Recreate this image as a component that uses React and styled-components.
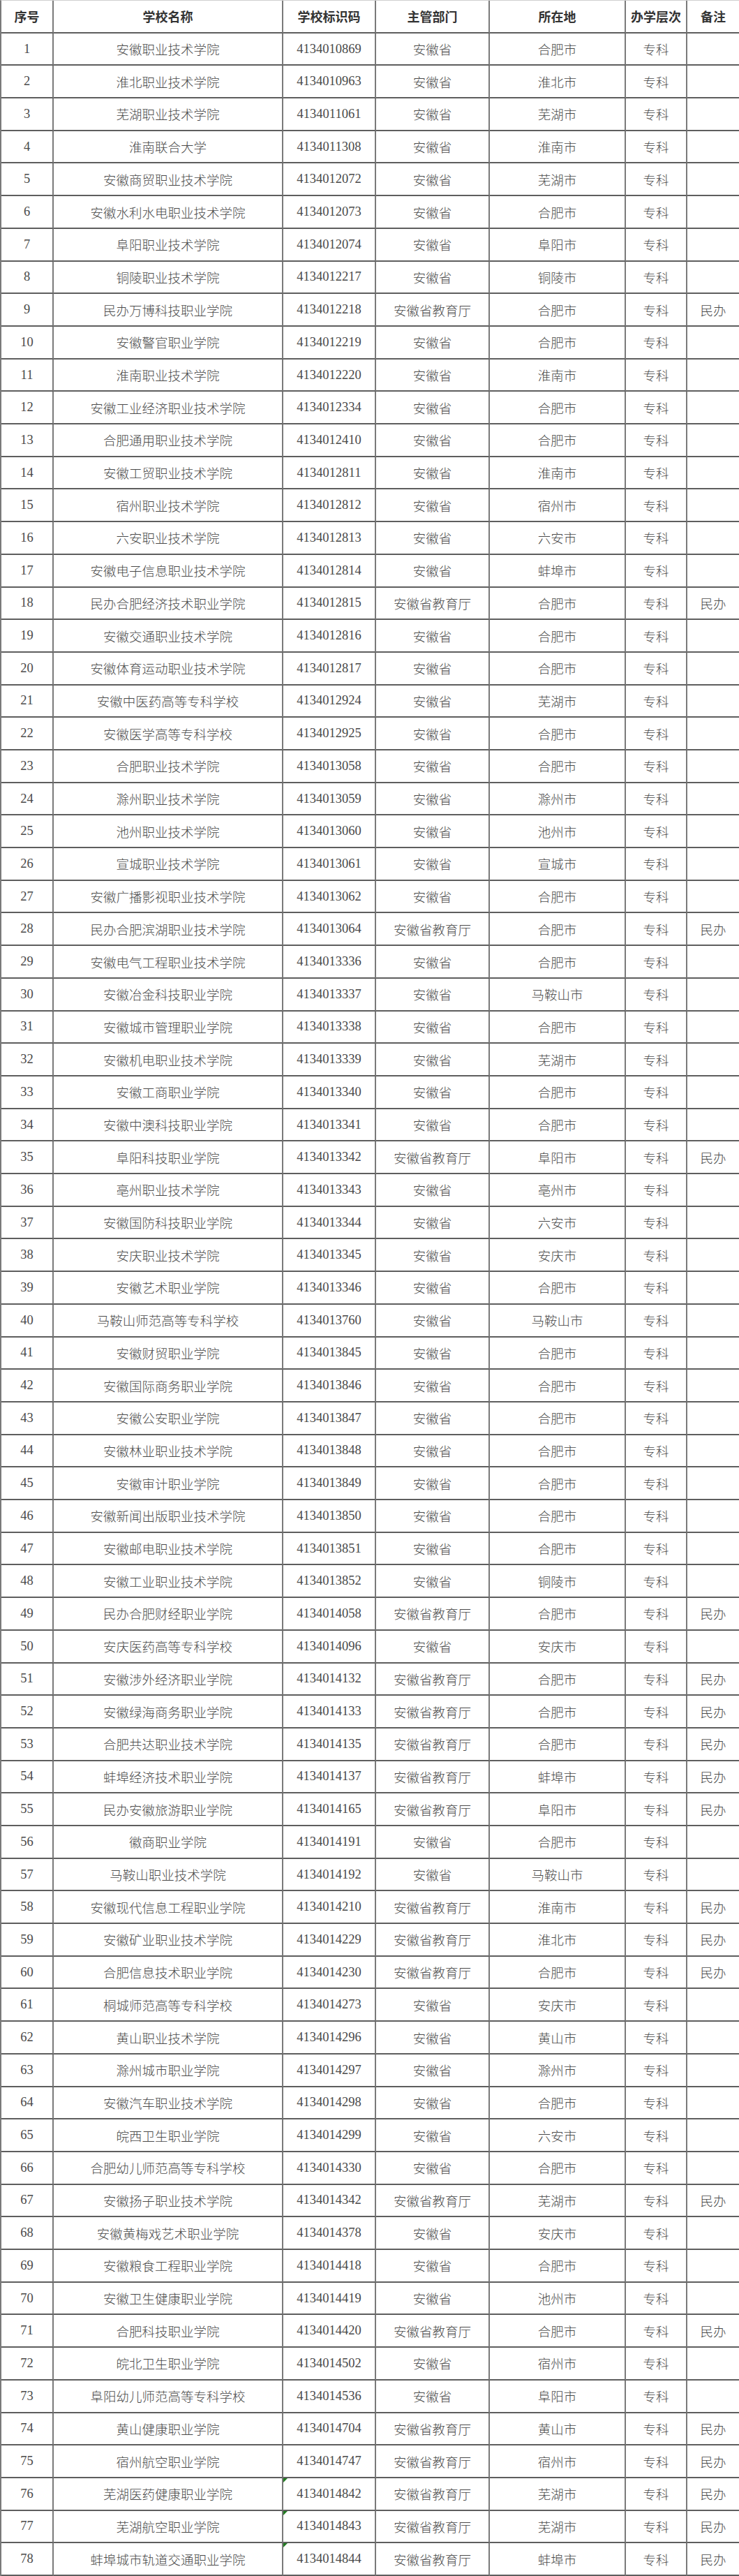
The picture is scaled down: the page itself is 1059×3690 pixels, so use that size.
import React from 'react'
import styled, { createGlobalStyle } from 'styled-components'

const GlobalStyle = createGlobalStyle`
  html, body {
    margin: 0;
    padding: 0;
    background: #fff;
  }
`

const headers = ['序号', '学校名称', '学校标识码', '主管部门', '所在地', '办学层次', '备注']

// 名称, 标识码, 主管部门(1 = 安徽省教育厅, 民办), 所在地, 文本格式标记
const schools = [
  ['安徽职业技术学院', '4134010869', 0, '合肥市'],
  ['淮北职业技术学院', '4134010963', 0, '淮北市'],
  ['芜湖职业技术学院', '4134011061', 0, '芜湖市'],
  ['淮南联合大学', '4134011308', 0, '淮南市'],
  ['安徽商贸职业技术学院', '4134012072', 0, '芜湖市'],
  ['安徽水利水电职业技术学院', '4134012073', 0, '合肥市'],
  ['阜阳职业技术学院', '4134012074', 0, '阜阳市'],
  ['铜陵职业技术学院', '4134012217', 0, '铜陵市'],
  ['民办万博科技职业学院', '4134012218', 1, '合肥市'],
  ['安徽警官职业学院', '4134012219', 0, '合肥市'],
  ['淮南职业技术学院', '4134012220', 0, '淮南市'],
  ['安徽工业经济职业技术学院', '4134012334', 0, '合肥市'],
  ['合肥通用职业技术学院', '4134012410', 0, '合肥市'],
  ['安徽工贸职业技术学院', '4134012811', 0, '淮南市'],
  ['宿州职业技术学院', '4134012812', 0, '宿州市'],
  ['六安职业技术学院', '4134012813', 0, '六安市'],
  ['安徽电子信息职业技术学院', '4134012814', 0, '蚌埠市'],
  ['民办合肥经济技术职业学院', '4134012815', 1, '合肥市'],
  ['安徽交通职业技术学院', '4134012816', 0, '合肥市'],
  ['安徽体育运动职业技术学院', '4134012817', 0, '合肥市'],
  ['安徽中医药高等专科学校', '4134012924', 0, '芜湖市'],
  ['安徽医学高等专科学校', '4134012925', 0, '合肥市'],
  ['合肥职业技术学院', '4134013058', 0, '合肥市'],
  ['滁州职业技术学院', '4134013059', 0, '滁州市'],
  ['池州职业技术学院', '4134013060', 0, '池州市'],
  ['宣城职业技术学院', '4134013061', 0, '宣城市'],
  ['安徽广播影视职业技术学院', '4134013062', 0, '合肥市'],
  ['民办合肥滨湖职业技术学院', '4134013064', 1, '合肥市'],
  ['安徽电气工程职业技术学院', '4134013336', 0, '合肥市'],
  ['安徽冶金科技职业学院', '4134013337', 0, '马鞍山市'],
  ['安徽城市管理职业学院', '4134013338', 0, '合肥市'],
  ['安徽机电职业技术学院', '4134013339', 0, '芜湖市'],
  ['安徽工商职业学院', '4134013340', 0, '合肥市'],
  ['安徽中澳科技职业学院', '4134013341', 0, '合肥市'],
  ['阜阳科技职业学院', '4134013342', 1, '阜阳市'],
  ['亳州职业技术学院', '4134013343', 0, '亳州市'],
  ['安徽国防科技职业学院', '4134013344', 0, '六安市'],
  ['安庆职业技术学院', '4134013345', 0, '安庆市'],
  ['安徽艺术职业学院', '4134013346', 0, '合肥市'],
  ['马鞍山师范高等专科学校', '4134013760', 0, '马鞍山市'],
  ['安徽财贸职业学院', '4134013845', 0, '合肥市'],
  ['安徽国际商务职业学院', '4134013846', 0, '合肥市'],
  ['安徽公安职业学院', '4134013847', 0, '合肥市'],
  ['安徽林业职业技术学院', '4134013848', 0, '合肥市'],
  ['安徽审计职业学院', '4134013849', 0, '合肥市'],
  ['安徽新闻出版职业技术学院', '4134013850', 0, '合肥市'],
  ['安徽邮电职业技术学院', '4134013851', 0, '合肥市'],
  ['安徽工业职业技术学院', '4134013852', 0, '铜陵市'],
  ['民办合肥财经职业学院', '4134014058', 1, '合肥市'],
  ['安庆医药高等专科学校', '4134014096', 0, '安庆市'],
  ['安徽涉外经济职业学院', '4134014132', 1, '合肥市'],
  ['安徽绿海商务职业学院', '4134014133', 1, '合肥市'],
  ['合肥共达职业技术学院', '4134014135', 1, '合肥市'],
  ['蚌埠经济技术职业学院', '4134014137', 1, '蚌埠市'],
  ['民办安徽旅游职业学院', '4134014165', 1, '阜阳市'],
  ['徽商职业学院', '4134014191', 0, '合肥市'],
  ['马鞍山职业技术学院', '4134014192', 0, '马鞍山市'],
  ['安徽现代信息工程职业学院', '4134014210', 1, '淮南市'],
  ['安徽矿业职业技术学院', '4134014229', 1, '淮北市'],
  ['合肥信息技术职业学院', '4134014230', 1, '合肥市'],
  ['桐城师范高等专科学校', '4134014273', 0, '安庆市'],
  ['黄山职业技术学院', '4134014296', 0, '黄山市'],
  ['滁州城市职业学院', '4134014297', 0, '滁州市'],
  ['安徽汽车职业技术学院', '4134014298', 0, '合肥市'],
  ['皖西卫生职业学院', '4134014299', 0, '六安市'],
  ['合肥幼儿师范高等专科学校', '4134014330', 0, '合肥市'],
  ['安徽扬子职业技术学院', '4134014342', 1, '芜湖市'],
  ['安徽黄梅戏艺术职业学院', '4134014378', 0, '安庆市'],
  ['安徽粮食工程职业学院', '4134014418', 0, '合肥市'],
  ['安徽卫生健康职业学院', '4134014419', 0, '池州市'],
  ['合肥科技职业学院', '4134014420', 1, '合肥市'],
  ['皖北卫生职业学院', '4134014502', 0, '宿州市'],
  ['阜阳幼儿师范高等专科学校', '4134014536', 0, '阜阳市'],
  ['黄山健康职业学院', '4134014704', 1, '黄山市'],
  ['宿州航空职业学院', '4134014747', 1, '宿州市'],
  ['芜湖医药健康职业学院', '4134014842', 1, '芜湖市', true],
  ['芜湖航空职业学院', '4134014843', 1, '芜湖市', true],
  ['蚌埠城市轨道交通职业学院', '4134014844', 1, '蚌埠市', true],
]

const Sheet = styled.div`
  display: grid;
  grid-template-columns: 75px 329px 133px 163px 195px 88px 76px;
  grid-template-rows: repeat(${schools.length + 1}, 1fr);
  width: 1059px;
  height: 3690px;
  box-sizing: border-box;
  border-top: 1px solid #cfcfcf;
  border-left: 2px solid #7a7a7a;
  background: #fff;
`

const HeaderCell = styled.div`
  display: flex;
  align-items: center;
  justify-content: center;
  box-sizing: border-box;
  border-right: 2px solid #7a7a7a;
  border-bottom: 2px solid #5e5e5e;
  font-family: "Noto Sans CJK SC", "Liberation Sans", sans-serif;
  font-size: 18px;
  font-weight: 700;
  color: #333;
  white-space: nowrap;
`

const Cell = styled.div`
  position: relative;
  display: flex;
  align-items: center;
  justify-content: center;
  box-sizing: border-box;
  border-right: 2px solid #7a7a7a;
  border-bottom: 2px solid #5e5e5e;
  font-family: "Liberation Serif", "Noto Sans CJK SC", serif;
  font-size: 18.5px;
  font-weight: 300;
  color: #4a4a4a;
  white-space: nowrap;

  /* 表格软件的"文本格式数字"绿色小角标 */
  &::before {
    content: '';
    display: ${p => (p.$flag ? 'block' : 'none')};
    position: absolute;
    top: 0;
    left: 0;
    border-top: 6px solid #1f7a1f;
    border-right: 6px solid transparent;
  }
`

export default function App() {
  return (
    <>
      <GlobalStyle />
      <Sheet>
        {headers.map(h => <HeaderCell key={h}>{h}</HeaderCell>)}
        {schools.map(([name, code, edu, city, flag], i) => (
          <React.Fragment key={code}>
            <Cell>{i + 1}</Cell>
            <Cell>{name}</Cell>
            <Cell $flag={flag}>{code}</Cell>
            <Cell>{edu ? '安徽省教育厅' : '安徽省'}</Cell>
            <Cell>{city}</Cell>
            <Cell>专科</Cell>
            <Cell>{edu ? '民办' : ''}</Cell>
          </React.Fragment>
        ))}
      </Sheet>
    </>
  )
}
